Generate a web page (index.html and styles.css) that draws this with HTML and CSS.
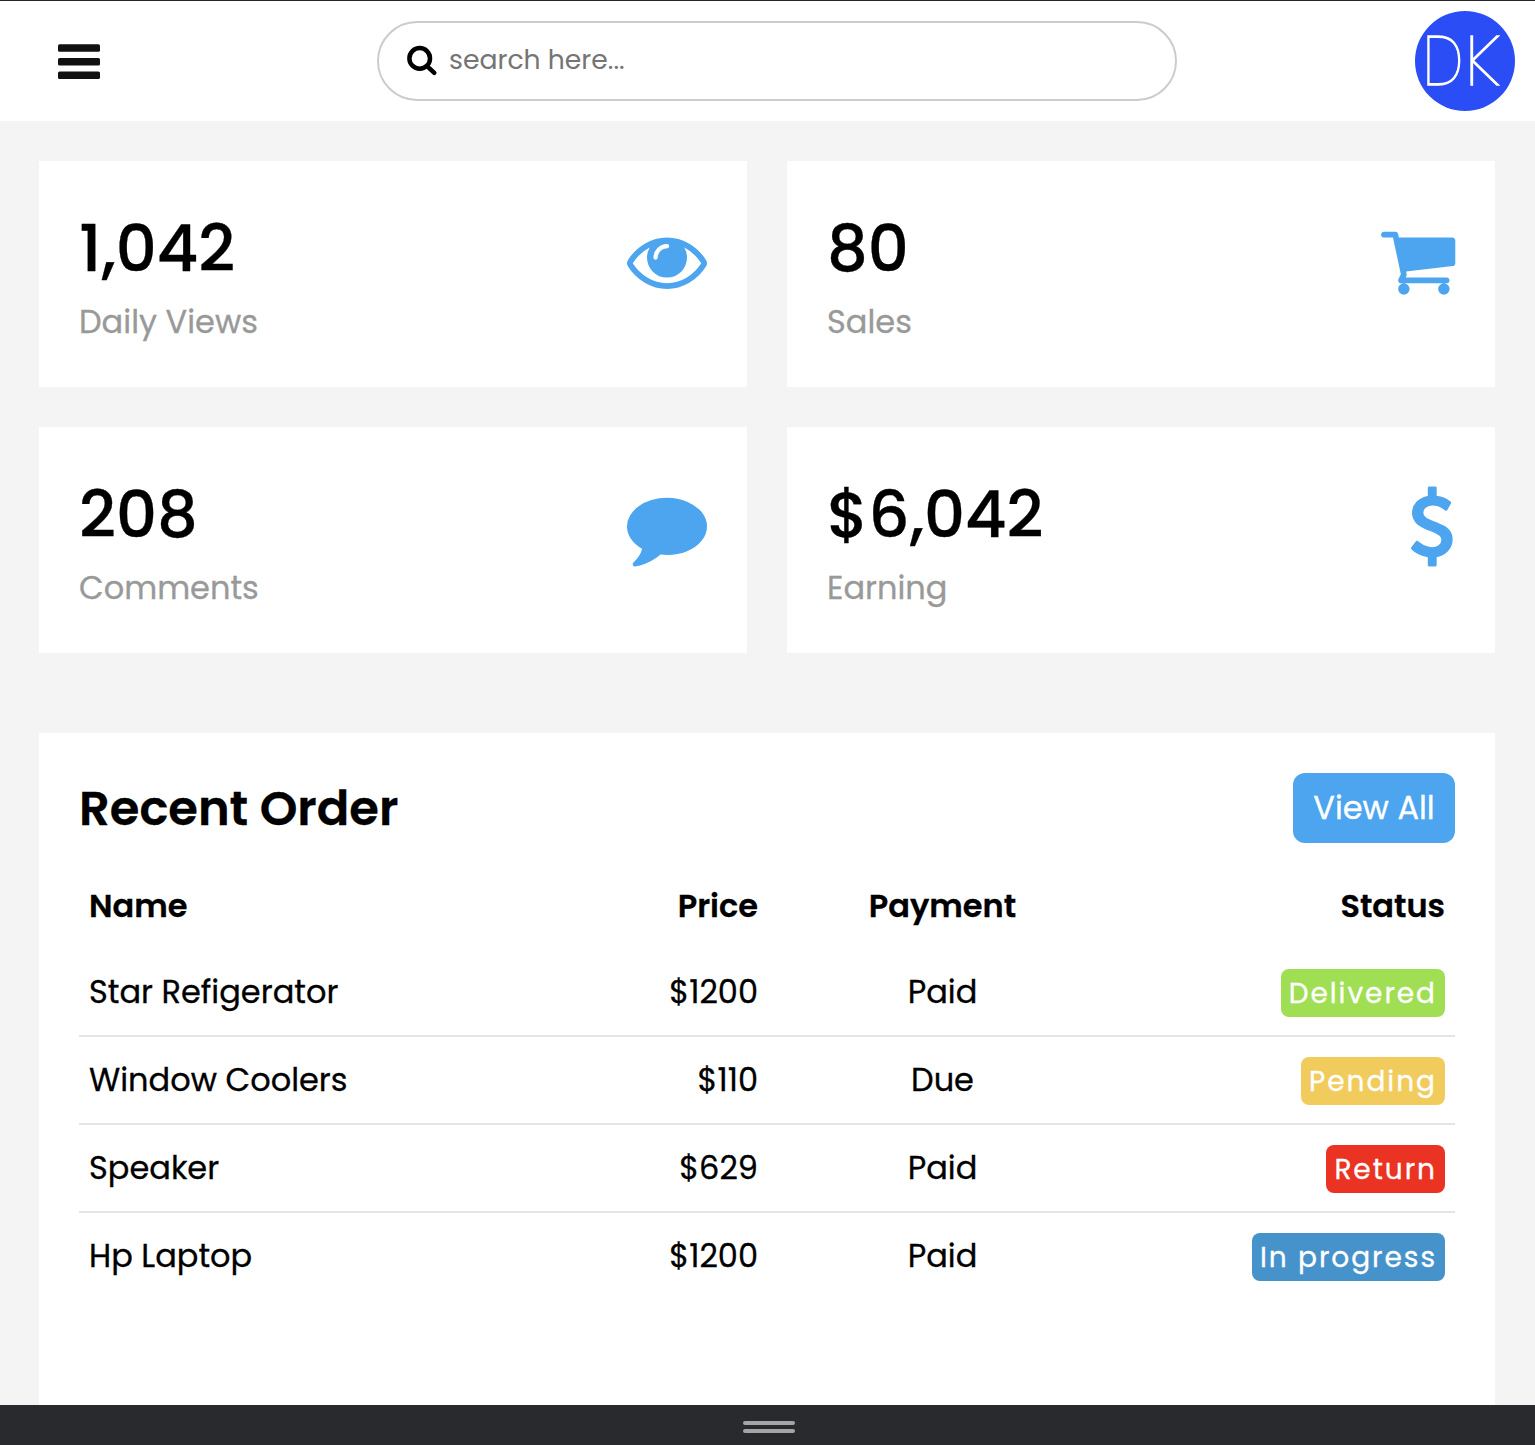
FILE: index.html
```html
<!DOCTYPE html>
<html lang="en">
<head>
<meta charset="utf-8">
<title>Dashboard</title>
<link rel="stylesheet" href="styles.css">
</head>
<body>
<header class="topbar">
  <svg class="menu" viewBox="0 0 42 36"><rect y="0.3" width="42" height="7.5" rx="1.6"/><rect y="14" width="42" height="7.5" rx="1.6"/><rect y="27.5" width="42" height="7.5" rx="1.6"/></svg>
  <div class="search">
    <svg class="search-icon" viewBox="0 0 32 32"><circle cx="13.7" cy="13.4" r="10.3"/><path d="M21.3 21.3 28.3 27.8"/></svg>
    <span class="placeholder">search here...</span>
  </div>
  <div class="avatar"><span class="first">D</span><span class="last">K</span></div>
</header>
<main>
  <section class="cards">
    <article class="card">
      <div><div class="number">1,042</div><div class="label">Daily Views</div></div>
      <svg class="icon" viewBox="0 0 1792 1792"><path d="M1664 960q-152-236-381-353 61 104 61 225 0 185-131.500 316.500t-316.500 131.500-316.500-131.500-131.500-316.500q0-121 61-225-229 117-381 353 133 205 333.500 326.500t434.500 121.500 434.500-121.500 333.500-326.500zM944 576q0-20-14-34t-34-14q-125 0-214.500 89.500t-89.500 214.500q0 20 14 34t34 14 34-14 14-34q0-86 61-147t147-61q20 0 34-14t14-34zM1792 960q0 34-20 69-140 230-376.500 368.500t-499.500 138.500-499.500-139-376.500-368q-20-35-20-69t20-69q140-229 376.500-368t499.500-139 499.500 139 376.500 368q20 35 20 69z"/></svg>
    </article>
    <article class="card">
      <div><div class="number">80</div><div class="label">Sales</div></div>
      <svg class="icon cart" viewBox="0 0 1664 1792"><path d="M640 1536q0 52-38 90t-90 38-90-38-38-90 38-90 90-38 90 38 38 90zm896 0q0 52-38 90t-90 38-90-38-38-90 38-90 90-38 90 38 38 90zm128-1088v512q0 24-16.500 42.500t-40.500 21.500l-1044 122q13 60 13 70 0 16-24 64h920q26 0 45 19t19 45-19 45-45 19h-1024q-26 0-45-19t-19-45q0-11 8-31.500t16-36 21.500-40 15.500-29.500l-177-823h-204q-26 0-45-19t-19-45 19-45 45-19h256q16 0 28.500 6.500t19.500 15.500 13 24.500 8 26 5.500 29.500 4.500 26h1201q26 0 45 19t19 45z"/></svg>
    </article>
    <article class="card">
      <div><div class="number">208</div><div class="label">Comments</div></div>
      <svg class="icon" viewBox="0 0 1792 1792"><path d="M1792 896q0 174-120 321.500t-326 233-450 85.500q-70 0-145-8-198 175-460 242-49 14-114 22-17 2-30.500-9t-17.500-29v-1q-3-4-.5-12t2-10 4.500-9.500l6-9 7-8.500 8-9q7-8 31-34.500t34.500-38 31-39.500 32.500-51 27-59 26-76q-157-89-247.500-220t-90.500-281q0-130 71-248.500t191-204.500 286-136.500 348-50.500q244 0 450 85.500t326 233 120 321.500z"/></svg>
    </article>
    <article class="card">
      <div><div class="number">$6,042</div><div class="label">Earning</div></div>
      <svg class="icon dollar" viewBox="384 0 1024 1792"><path d="M1362 1185q0 153-99.500 263.500t-258.500 136.500v175q0 14-9 23t-23 9h-135q-13 0-22.500-9.500t-9.500-22.500v-175q-66-9-127.500-31t-101.500-44.500-74-48-46.500-37.500-17.500-18q-17-21-2-41l103-135q7-10 23-12 15-2 24 9l2 2q113 99 243 125 37 8 74 8 81 0 142.500-43t61.500-122q0-28-15-53t-33.500-42-58.500-37.500-66-32-80-32.500q-39-16-61.500-25t-61.500-26.500-62.500-31-56.500-35.500-53.500-42.500-43.500-49-35.500-58-21-66.500-8.500-78q0-138 98-242t255-134v-180q0-13 9.500-22.500t22.500-9.500h135q14 0 23 9t9 23v176q57 6 110.500 23t87 33.500 63.500 37.500 39 29 15 14q17 18 5 38l-81 146q-8 15-23 16-14 3-27-7-3-3-14.500-12t-39-26.500-58.500-32-74.500-26-85.500-11.500q-95 0-155 43t-60 111q0 26 8.500 48t29.500 41.500 39.500 33 56 31 60.500 27 70 27.500q53 20 81 31.500t76 35 75.500 42.500 62 50 53 63.500 31.500 76.500 13 94z"/></svg>
    </article>
  </section>
  <section class="orders">
    <div class="orders-head"><h2>Recent Order</h2><a class="button">View All</a></div>
    <table>
      <colgroup><col class="c-name"><col class="c-price"><col class="c-pay"><col class="c-status"></colgroup>
      <thead><tr><th>Name</th><th>Price</th><th>Payment</th><th>Status</th></tr></thead>
      <tbody>
        <tr><td>Star Refigerator</td><td>$1200</td><td>Paid</td><td><span class="badge delivered">Delivered</span></td></tr>
        <tr><td>Window Coolers</td><td>$110</td><td>Due</td><td><span class="badge pending">Pending</span></td></tr>
        <tr><td>Speaker</td><td>$629</td><td>Paid</td><td><span class="badge return">Return</span></td></tr>
        <tr><td>Hp Laptop</td><td>$1200</td><td>Paid</td><td><span class="badge progress">In progress</span></td></tr>
      </tbody>
    </table>
  </section>
</main>
<footer class="handle"><i></i><i></i></footer>
</body>
</html>
```
FILE: styles.css
```css
* { box-sizing: border-box; margin: 0; padding: 0; }
body {
  height: 1445px;
  overflow: hidden;
  display: flex;
  flex-direction: column;
  background: #f4f4f4;
  color: #000;
  font-family: Poppins, Inter, sans-serif;
  font-size: 32px;
  -webkit-text-stroke: .3px;
}
.topbar {
  height: 121px;
  flex: none;
  border-top: 1px solid #262629;
  background: #fff;
  display: flex;
  justify-content: space-between;
  align-items: center;
  padding: 0 20px 0 58px;
}
.menu { width: 42px; height: 36px; margin-top: 2px; fill: #111; }
.search {
  width: 800px;
  height: 80px;
  margin-left: 39px;
  border: 2px solid #ccc;
  border-radius: 40px;
  display: flex;
  align-items: center;
  padding-left: 27px;
}
.search-icon { width: 32px; height: 32px; fill: none; stroke: #000; stroke-width: 4.5; stroke-linecap: round; }
.placeholder { font-size: 26.67px; color: #757575; margin: 0 0 2px 11px; -webkit-text-stroke: 0; }
.avatar {
  width: 100px;
  height: 100px;
  border-radius: 50%;
  background: #2b4df5;
  color: #fff;
  font-size: 69px;
  font-weight: 200;
  line-height: 100px;
  text-align: center;
  -webkit-text-stroke: 1.3px;
}
.avatar span { display: inline-block; }
.first { transform: translateX(-5px) scaleX(.83); }
.last { transform: translateX(-6.5px) scaleX(1.03); }
main { flex: 1; min-height: 0; padding: 40px 40px 0 39px; display: flex; flex-direction: column; gap: 80px; }
.cards { display: grid; grid-template-columns: 1fr 1fr; gap: 40px; }
.card { height: 226px; background: #fff; padding: 40px; display: flex; justify-content: space-between; }
.number { font-size: 64px; line-height: 96px; font-weight: 500; }
.label { font-size: 32px; line-height: 50px; color: #999; }
.icon { width: 80px; height: 80px; margin-top: 19px; fill: #4ca5ee; overflow: visible; }
.icon path { transform: translateY(9px); }
.cart { width: 74.3px; }
.dollar { width: 45.7px; }
.orders { flex: 1; background: #fff; padding: 40px; }
.orders-head { display: flex; justify-content: space-between; height: 90px; }
h2 { font-size: 48px; font-weight: 600; line-height: 72px; }
.button { width: 162px; height: 70px; border-radius: 12px; background: #4ca5ee; color: #fff; text-align: center; line-height: 70px; }
table { width: 1376px; table-layout: fixed; border-collapse: collapse; }
.c-name { width: 400px; }
.c-price { width: 289px; }
.c-pay { width: 349px; }
.c-status { width: 338px; }
th { height: 85px; font-weight: 600; }
td { height: 88px; }
tr:last-child td { height: 87px; }
th, td { padding: 0 10px; text-align: right; }
th:nth-child(1), td:nth-child(1) { text-align: left; }
th:nth-child(3), td:nth-child(3) { text-align: center; }
tbody tr:not(:last-child) { border-bottom: 2px solid #e5e5e5; }
.badge { display: inline-block; height: 48px; line-height: 50px; padding: 0 8px; border-radius: 8px; color: #fff; font-size: 28px; letter-spacing: 1.96px; vertical-align: middle; }
.delivered { background: #a0df53; }
.pending { background: #f1cc5d; }
.return { background: #eb3323; }
.progress { background: #4692cb; }
.handle { height: 40px; flex: none; background: #292a2e; display: flex; flex-direction: column; align-items: center; justify-content: center; gap: 4px; padding: 3px 0 0 3px; }
.handle i { width: 52px; height: 4px; border-radius: 2px; background: #a5a5a5; }
```
